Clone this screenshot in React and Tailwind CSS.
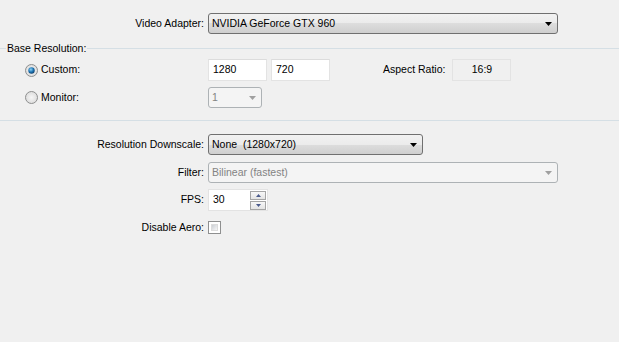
import React from "react";

const font = { fontFamily: "Tahoma, 'Liberation Sans', Arial, sans-serif" };

function Arrow({ disabled }) {
  return (
    <svg width="7" height="4" viewBox="0 0 7 4" className="shrink-0">
      <path d="M0 0H7L3.5 4Z" fill={disabled ? "#a0a0a0" : "#000"} />
    </svg>
  );
}

// Win7 style button combo (dropdown list)
function Combo({ value, width }) {
  return (
    <div
      className={`${width} h-[21px] rounded-[3px] border border-[#707070] flex items-center justify-between pl-[3px] pr-[5px] bg-[linear-gradient(#f2f2f2_0%,#ebebeb_50%,#dddddd_50%,#cfcfcf_100%)]`}
    >
      <span className="text-[10.5px] text-black leading-none whitespace-pre">{value}</span>
      <Arrow />
    </div>
  );
}

function DisabledCombo({ value, width }) {
  return (
    <div
      className={`${width} h-[21px] rounded-[3px] border border-[#adb2b5] bg-[#f4f4f4] flex items-center justify-between pl-[3px] pr-[5px]`}
    >
      <span className="text-[10.5px] text-[#838383] leading-none">{value}</span>
      <Arrow disabled />
    </div>
  );
}

function Radio({ checked }) {
  return (
    <svg width="13" height="13" viewBox="0 0 13 13" className="shrink-0">
      <defs>
        <radialGradient id="rb" cx="50%" cy="50%" r="60%">
          <stop offset="0%" stopColor="#f6f6f6" />
          <stop offset="100%" stopColor="#d8d8d8" />
        </radialGradient>
        <radialGradient id="rdot" cx="40%" cy="35%" r="70%">
          <stop offset="0%" stopColor="#8fd3f7" />
          <stop offset="55%" stopColor="#1c74b3" />
          <stop offset="100%" stopColor="#0d3a66" />
        </radialGradient>
      </defs>
      <circle cx="6.5" cy="6.5" r="6" fill="url(#rb)" stroke="#8e8f8f" strokeWidth="1" />
      {checked && <circle cx="6.5" cy="6.5" r="3.2" fill="url(#rdot)" />}
    </svg>
  );
}

function TextBox({ value, width, grey }) {
  return (
    <div
      className={`${width} h-[22px] border border-[#e3e3e3] ${grey ? "bg-[#f0f0f0] justify-center" : "bg-white pl-[4px]"} flex items-center text-[10.5px] text-black`}
      style={grey ? undefined : { borderTopColor: "#dcdcdc" }}
    >
      {value}
    </div>
  );
}

function LabelRow({ label, children, className = "" }) {
  return (
    <div className={`flex items-center ${className}`}>
      <div className="w-[204px] text-right text-[10.5px] text-black">{label}</div>
      <div className="ml-[4px] flex items-center">{children}</div>
    </div>
  );
}

export default function App() {
  return (
    <div className="w-[619px] h-[342px] bg-[#f0f0f0] overflow-hidden pt-[13px]" style={font}>
      <LabelRow label="Video Adapter:" className="h-[21px]">
        <Combo value="NVIDIA GeForce GTX 960" width="w-[350px]" />
      </LabelRow>

      {/* Base Resolution group */}
      <div className="mt-[7px] h-[14px] flex items-center">
        <div className="w-[6px] h-px bg-[#d5dfe5]" />
        <span className="px-[1px] text-[10.5px] text-black leading-none">Base Resolution:</span>
        <div className="flex-1 h-px bg-[#d5dfe5]" />
      </div>

      <div className="mt-[4px] h-[22px] flex items-center">
        <div className="w-[208px] flex items-center pl-[25px] gap-[3px]">
          <Radio checked />
          <span className="text-[10.5px] text-black">Custom:</span>
        </div>
        <TextBox value="1280" width="w-[59px]" />
        <div className="ml-[4px]">
          <TextBox value="720" width="w-[59px]" />
        </div>
        <span className="ml-[53px] text-[10.5px] text-black">Aspect Ratio:</span>
        <div className="ml-[7px]">
          <TextBox value="16:9" width="w-[59px]" grey />
        </div>
      </div>

      <div className="mt-[6px] h-[21px] flex items-center">
        <div className="w-[208px] flex items-center pl-[25px] gap-[3px]">
          <Radio />
          <span className="text-[10.5px] text-black">Monitor:</span>
        </div>
        <DisabledCombo value="1" width="w-[54px]" />
      </div>

      <div className="mt-[12px] h-px bg-[#d5dfe5]" />

      <LabelRow label="Resolution Downscale:" className="mt-[13px] h-[21px]">
        <Combo value="None  (1280x720)" width="w-[215px]" />
      </LabelRow>

      <LabelRow label="Filter:" className="mt-[7px] h-[21px]">
        <DisabledCombo value="Bilinear (fastest)" width="w-[350px]" />
      </LabelRow>

      <LabelRow label="FPS:" className="mt-[6px] h-[22px]">
        <div className="w-[60px] h-[22px] border border-[#e3e3e3] bg-white flex items-center justify-between pl-[4px] pr-px">
          <span className="text-[10.5px] text-black">30</span>
          <div className="flex flex-col gap-px">
            {[0, 1].map((i) => (
              <div
                key={i}
                className="w-[16px] h-[9px] border border-[#a5a5a5] bg-[linear-gradient(#f7f7f7,#e4e4e4)] flex items-center justify-center"
              >
                <svg width="5" height="3" viewBox="0 0 5 3">
                  <path d={i === 0 ? "M0 3H5L2.5 0Z" : "M0 0H5L2.5 3Z"} fill="#4a5a8c" />
                </svg>
              </div>
            ))}
          </div>
        </div>
      </LabelRow>

      <LabelRow label="Disable Aero:" className="mt-[10px] h-[13px]">
        <div className="w-[13px] h-[13px] border border-[#8e8f8f] bg-white p-[2px]">
          <div className="w-full h-full bg-[linear-gradient(135deg,#cbcfd5,#f6f6f6)] border border-[#dcdcdc]" />
        </div>
      </LabelRow>
    </div>
  );
}
